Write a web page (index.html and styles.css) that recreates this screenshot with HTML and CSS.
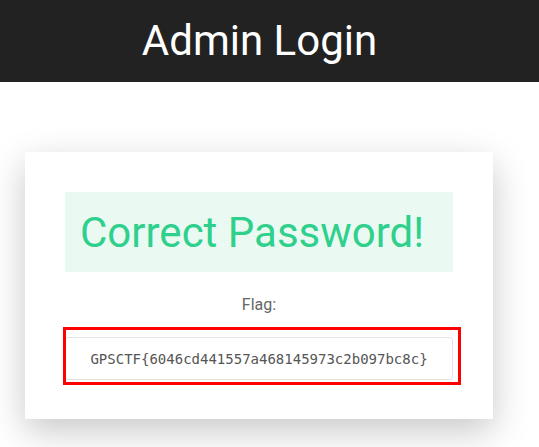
FILE: index.html
```html
<!DOCTYPE html>
<html>
<head>
<meta charset="utf-8">
<link rel="stylesheet" href="styles.css">
</head>
<body>
<header class="topbar"><h1 class="title">Admin Login</h1></header>
<main class="page">
  <section class="card">
    <div class="alert">Correct Password!</div>
    <div class="label">Flag:</div>
    <div class="flag-wrap">
      <div class="flag">GPSCTF{6046cd441557a468145973c2b097bc8c}</div>
      <div class="highlight"></div>
    </div>
  </section>
</main>
</body>
</html>
```
FILE: styles.css
```css
html, body { margin: 0; padding: 0; background: #fff; }
body { font-family: Roboto, "Noto Sans", sans-serif; }
.topbar {
  background: #222;
  height: 82px;
  display: flex;
  align-items: center;
  justify-content: center;
  padding-right: 20px;
}
.title {
  margin: 0;
  color: #fff;
  font-weight: 400;
  font-size: 42px;
  line-height: 1;
}
.page { padding: 70px 0 28px 25px; }
.card {
  width: 468px;
  box-sizing: border-box;
  padding: 40px 40px 39px;
  background: #fff;
  box-shadow: 0 12px 34px rgba(0,0,0,0.22);
}
.alert {
  height: 80px;
  box-sizing: border-box;
  padding-left: 15px;
  display: flex;
  align-items: center;
  background: #eafaf3;
  color: #2fd08c;
  font-size: 42px;
}
.label {
  margin-top: 21px;
  text-align: center;
  color: #666;
  font-size: 16px;
  line-height: 24px;
}
.flag-wrap { position: relative; margin-top: 20px; }
.flag {
  height: 43px;
  box-sizing: border-box;
  border: 1px solid #e3e3e3;
  border-radius: 3px;
  display: flex;
  align-items: center;
  justify-content: center;
  font-family: "DejaVu Sans Mono", monospace;
  font-size: 14px;
  color: #555;
}
.highlight {
  position: absolute;
  left: -2px;
  top: -10px;
  width: 398px;
  height: 58px;
  box-sizing: border-box;
  border: 3px solid #f00;
}
```
